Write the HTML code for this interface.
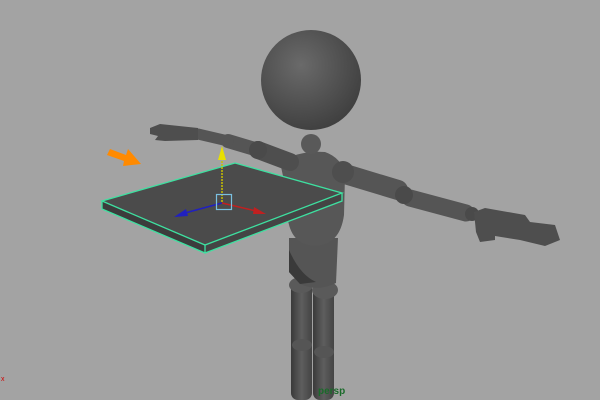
<!DOCTYPE html>
<html><head><style>
html,body{margin:0;padding:0;background:#a3a3a3;width:600px;height:400px;overflow:hidden}
</style></head><body>
<svg width="600" height="400" viewBox="0 0 600 400" xmlns="http://www.w3.org/2000/svg" style="position:absolute;left:0;top:0">
<defs>
<radialGradient id="hg" cx="0.4" cy="0.35" r="0.7"><stop offset="0" stop-color="#6a6a6a"/><stop offset="1" stop-color="#3e3e3e"/></radialGradient>
<linearGradient id="lg" x1="0" x2="1"><stop offset="0" stop-color="#3a3a3a"/><stop offset="0.5" stop-color="#5e5e5e"/><stop offset="1" stop-color="#444"/></linearGradient>
</defs>
<rect width="600" height="400" fill="#a3a3a3"/>
<!-- legs -->
<rect x="291" y="282" width="21" height="118" rx="7" fill="url(#lg)"/>
<rect x="313" y="282" width="21" height="118" rx="7" fill="url(#lg)"/>
<ellipse cx="302" cy="345" rx="10" ry="6" fill="#555"/>
<ellipse cx="324" cy="352" rx="10" ry="6" fill="#555"/>
<ellipse cx="301" cy="285" rx="12" ry="8" fill="#5a5a5a"/>
<ellipse cx="325" cy="290" rx="13" ry="9" fill="#5a5a5a"/>
<!-- pelvis/torso -->
<path d="M289 238 L338 238 L336 283 Q318 292 300 284 L289 272 Z" fill="#555"/>
<path d="M289 250 Q300 275 316 282 L300 284 L289 272 Z" fill="#3a3a3a"/>
<path d="M280 162 Q300 150 325 152 Q342 158 345 175 L344 215 Q340 245 315 246 Q292 245 288 220 L286 190 Z" fill="#575757"/>
<!-- arms -->
<g stroke-linecap="round" fill="none">
<line x1="290" y1="162" x2="258" y2="150" stroke="#4e4e4e" stroke-width="18"/>
<line x1="258" y1="150" x2="228" y2="141" stroke="#555" stroke-width="14"/>
<line x1="228" y1="141" x2="198" y2="134" stroke="#555" stroke-width="11"/>
<line x1="345" y1="174" x2="398" y2="190" stroke="#555" stroke-width="20"/>
<line x1="410" y1="198" x2="466" y2="213" stroke="#555" stroke-width="17"/>
</g>
<circle cx="258" cy="150" r="9" fill="#4a4a4a"/>
<circle cx="404" cy="195" r="9" fill="#4a4a4a"/>
<circle cx="472" cy="214" r="7" fill="#4a4a4a"/>
<circle cx="343" cy="172" r="11" fill="#4e4e4e"/>
<path d="M198 128 L160 124 L150 128 L150 134 L158 136 L155 140 L165 141 L198 140 Z" fill="#4e4e4e"/>
<path d="M474 212 L485 208 L525 215 L530 222 L555 225 L560 240 L545 246 L520 240 L495 236 L495 240 L480 242 L476 232 Z" fill="#4e4e4e"/>
<!-- neck, head -->
<circle cx="311" cy="144" r="10" fill="#595959"/>
<circle cx="311" cy="80" r="50" fill="url(#hg)"/>
<!-- plane -->
<path d="M102 201 L235 163 L342 193 L205 245 Z" fill="#4b4b4b"/>
<path d="M102 201 L205 245 L205 253 L102 209 Z" fill="#3c3c3c"/>
<path d="M205 245 L342 193 L342 201 L205 253 Z" fill="#444"/>
<path d="M102 201 L235 163 L342 193 L205 245 Z M102 201 L102 209 L205 253 L342 201 L342 193 M205 245 L205 253" fill="none" stroke="#3ee0a0" stroke-width="1.3"/>
<!-- gizmo -->
<line x1="222" y1="202" x2="222" y2="158" stroke="#c8c000" stroke-width="1.5" stroke-dasharray="2 1"/>
<path d="M222 146 L226 160 L218 160 Z" fill="#e8e000"/>
<line x1="222" y1="203" x2="185" y2="213" stroke="#2020c0" stroke-width="1.5"/>
<path d="M174 217 L186 209 L188 216 Z" fill="#2020c0"/>
<line x1="222" y1="203" x2="256" y2="211" stroke="#c02020" stroke-width="1.5"/>
<path d="M266 214 L254 207 L253 214 Z" fill="#c02020"/>
<rect x="216.5" y="194.5" width="15" height="15" fill="none" stroke="#7ac0e0" stroke-width="1.2"/>
<!-- orange arrow -->
<path d="M107 155 L110 149 L126 155 L128 149 L141 164 L123 166 L124 161 Z" fill="#ff8a00"/>
<text x="318" y="394" font-family="Liberation Sans, sans-serif" font-size="10" font-weight="bold" fill="#1a6a2a">persp</text>
<text x="1" y="381" font-family="Liberation Sans, sans-serif" font-size="7" fill="#d00000">x</text>
</svg>
</body></html>
